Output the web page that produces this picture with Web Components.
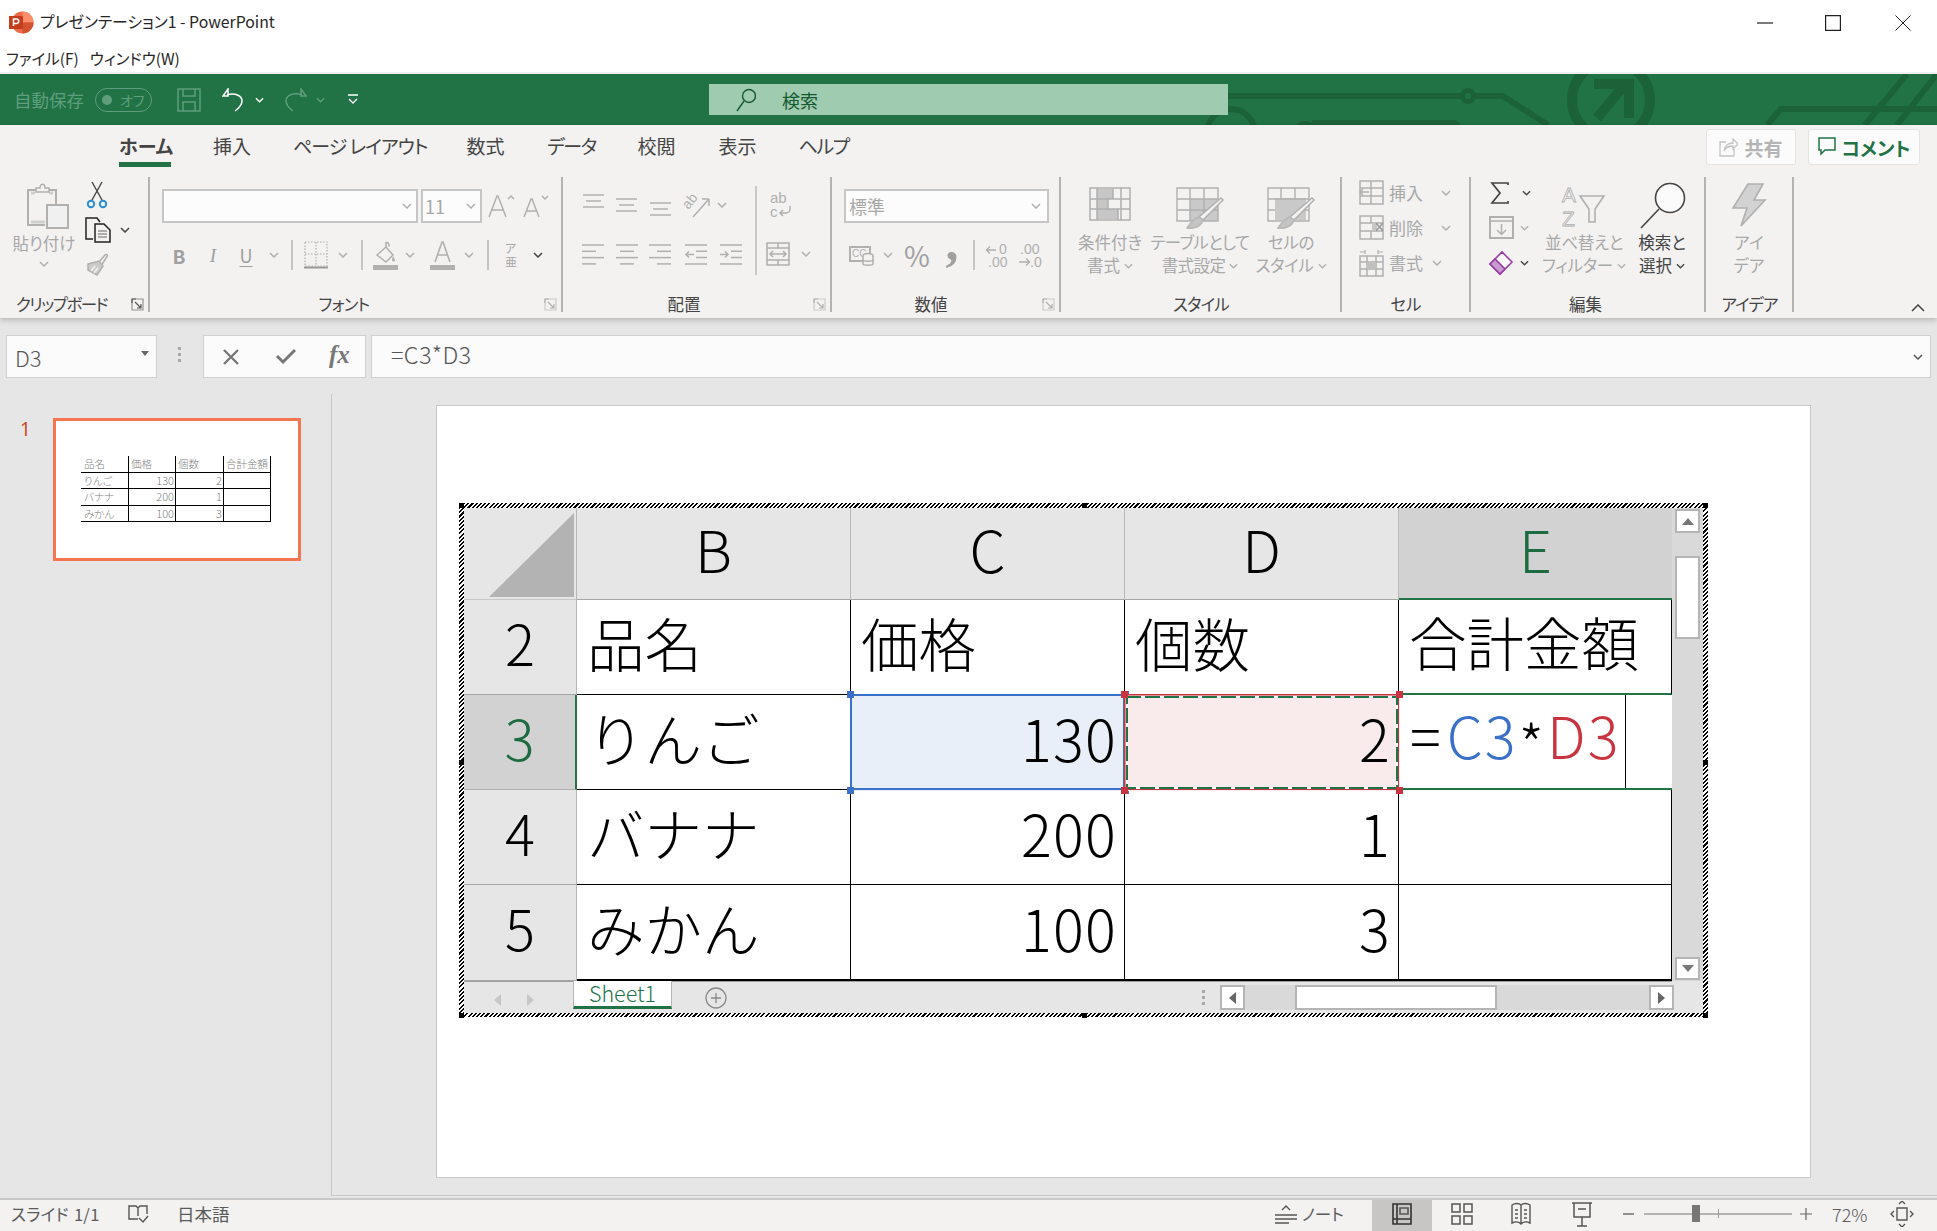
<!DOCTYPE html>
<html lang="ja">
<head>
<meta charset="utf-8">
<title>プレゼンテーション1 - PowerPoint</title>
<style>
  html, body { margin:0; padding:0; background:#e6e6e6; }
  body { width:1937px; height:1231px; overflow:hidden; font-family:"Noto Sans CJK JP","Noto Sans",sans-serif; display:flex; flex-direction:column; }
</style>
</head>
<body>
<x-titlebar>プレゼンテーション1 - PowerPoint</x-titlebar>
<x-menubar></x-menubar>
<x-qat></x-qat>
<x-ribbon></x-ribbon>
<x-formula name="D3" value="=C3*D3"></x-formula>
<x-main>
  <x-thumb slot="pane"></x-thumb>
  <x-sheet>
    <x-cell kind="corner"></x-cell>
    <x-cell kind="col">B</x-cell><x-cell kind="col">C</x-cell><x-cell kind="col">D</x-cell><x-cell kind="col" active>E</x-cell>

    <x-cell kind="row">2</x-cell>
    <x-cell>品名</x-cell><x-cell>価格</x-cell><x-cell>個数</x-cell><x-cell top>合計金額</x-cell>

    <x-cell kind="row" active>3</x-cell>
    <x-cell lead>りんご</x-cell><x-cell num sel="blue">130</x-cell><x-cell num sel="red">2</x-cell>
    <x-cell edit><span style="color:#000;margin:0 6px 0 4px">=</span><span style="color:#3a70c8;letter-spacing:2px">C3</span><span style="color:#000;position:relative;top:9px;margin:0 3px 0 1px">*</span><span style="color:#c8343f;letter-spacing:2px">D3</span></x-cell>

    <x-cell kind="row">4</x-cell>
    <x-cell>バナナ</x-cell><x-cell num>200</x-cell><x-cell num>1</x-cell><x-cell></x-cell>

    <x-cell kind="row">5</x-cell>
    <x-cell last>みかん</x-cell><x-cell num last>100</x-cell><x-cell num last>3</x-cell><x-cell last></x-cell>
  </x-sheet>
</x-main>
<x-status></x-status>

<script>
const FONT = '"Noto Sans CJK JP","Noto Sans",sans-serif';
const LAT = `'Liberation Sans',sans-serif`;
const G = '#b0b0b0', D = '#444444', GREEN = '#217346';

// small helpers for the ribbon markup
const ch = (color = G, w = 10) => `<svg width="${w}" height="6" viewBox="0 0 10 6" style="display:block"><path d="M1 1l4 4 4-4" fill="none" stroke="${color}" stroke-width="1.5"/></svg>`;
const svg = (w, h, inner, extra = '') => `<svg width="${w}" height="${h}" viewBox="0 0 ${w} ${h}" fill="none" stroke="${G}" stroke-width="1.5" style="display:block;overflow:visible;${extra}">${inner}</svg>`;
const c = (w, html, style = '') => `<span class="c" style="width:${w}px;${style}">${html}</span>`;
const launcher = (color = G) => `<svg class="launch" width="13" height="13" viewBox="0 0 13 13" fill="none" stroke="${color}" stroke-width="1.2"><path d="M1 1h11v11H1z" stroke-opacity=".6"/><path d="M1 1h4M1 1v4M4 4l6 6M6 10h4V6"/></svg>`;
const lines = (widths, gap = 6) => widths.map((wd, i) => `<path d="M${wd[0]} ${i * gap + 1}h${wd[1]}"/>`).join('');
const label = (x, y, size, t, extra = '') => `<text x="${x}" y="${y}" font-family="${LAT}" font-size="${size}" fill="${G}" stroke="none" ${extra}>${t}</text>`;

const ICONS = {
  paste: svg(42, 46, `<path d="M21 7h8v15M18 42H1V7h8" stroke-width="2"/><path d="M4 10h4M22 10h4M4 39h14" stroke="#cfcfcf" stroke-width="3"/><path d="M9 9V5h4c0-5 5-5 5 0h4v4z" fill="#f3f2f1"/><path d="M20 22h21v23H20z" fill="#f0f0f0" stroke-width="2"/>`),
  cut: svg(24, 28, `<path d="M7 1l10 18M17 1L7 19" stroke="${D}" stroke-width="1.4"/><circle cx="6" cy="23" r="3.2" stroke="#2b8fd1" stroke-width="2"/><circle cx="18" cy="23" r="3.2" stroke="#2b8fd1" stroke-width="2"/>`),
  copy: svg(26, 26, `<path d="M8 22H1V1h11l3 4" stroke="#222"/><path d="M10 7h9l6 6v12H10z" stroke="#222"/><path d="M13 14h9M13 17h9M13 20h9" stroke="#666" stroke-width="1.2"/>`),
  brush: svg(26, 24, `<path d="M14 10l6-7c1-1.500 3 0 2 1.500l-5 8" fill="none"/><path d="M3 12l11-3 4 5-6 9-9-5z" fill="#cbcbcb"/><path d="M6 19l4-5M9 21l4-5" stroke="#f3f2f1"/>`),
  borders: svg(24, 28, `<path d="M1 1h22v24H1z" stroke-dasharray="1.500 1.500" stroke-width="1.2"/><path d="M12 1v24M1 13h22" stroke-dasharray="1.500 1.500" stroke-width="1.2"/><path d="M0 26.500h24" stroke-width="2" stroke="#999"/>`),
  fill: svg(25, 29, `<path d="M4 14L13 6l7 8-7 7z"/><path d="M13 6V1.500c2-.5 3 .5 3 4" /><path d="M20 15c1 2 2 3 2 4a1.500 1.500 0 01-3 0c0-1 .5-2 1-4z" fill="${G}" stroke="none"/><path d="M0 24h25v5H0z" fill="${G}" stroke="none"/>`),
  fontA: svg(25, 29, `<path d="M5 21L12 1h1l7 20M7.500 14h10" stroke-width="1.6"/><path d="M0 24h25v5H0z" fill="${G}" stroke="none"/>`),
  alignTop: svg(21, 14, lines([[0,21],[3,15],[0,21]])),
  alignMid: svg(21, 14, lines([[0,21],[3,15],[0,21]])),
  alignLeft: svg(22, 21, lines([[0,22],[0,14],[0,22],[0,14]],6.3)),
  alignCen: svg(22, 21, lines([[0,22],[4,14],[0,22],[4,14]],6.3)),
  alignRight: svg(22, 21, lines([[0,22],[8,14],[0,22],[8,14]],6.3)),
  indDec: svg(22, 21, `<path d="M0 1h22M11 7.300h11M11 13.600h11M0 20h22"/><path d="M9 10.500H1M4 7.500l-3 3 3 3"/>`),
  indInc: svg(22, 21, `<path d="M0 1h22M11 7.300h11M11 13.600h11M0 20h22"/><path d="M0 10.500h8M5 7.500l3 3-3 3"/>`),
  orient: svg(25, 26, `<path d="M8 25L24 7M24 7h-7M24 7v7"/>${label(-2, 13, 14, 'ab', 'transform="rotate(-50 6 10)"')}`),
  wrap: svg(22, 26, `${label(0, 11, 15, 'ab')}${label(0, 25, 15, 'c')}<path d="M20 14v3a4 4 0 01-4 4h-6M13 18l-3 3 3 3"/>`),
  merge: svg(24, 24, `<path d="M1 1h22v22H1zM1 6h22M1 18h22M12 1v5M12 18v5" stroke-width="1.6"/><path d="M4 12h16M7 9l-3 3 3 3M17 9l3 3-3 3"/>`),
  currency: svg(25, 21, `<path d="M1 2h20v14H1z" stroke-width="2"/>${label(3, 12, 10, 'CC')}<ellipse cx="19" cy="11" rx="5" ry="2.500" fill="#f3f2f1"/><path d="M14 11v8c0 1.500 10 1.500 10 0v-8" fill="#f3f2f1"/><path d="M14 15c0 1.500 10 1.500 10 0"/>`),
  incDec: svg(25, 24, `<path d="M11 7H2M5 3.500L1.500 7 5 10.500" stroke-width="1.4"/>${label(14, 11, 14, '0')}${label(3, 24, 14, '.00')}`),
  decDec: svg(25, 24, `${label(2, 11, 14, '.00')}<path d="M1 19h10M8 15.500l3.500 3.500-3.500 3.500" stroke-width="1.4"/>${label(12, 24, 14, '.0')}`),
  cond: svg(42, 34, `<path d="M8 2h16v10H8zM8 12h11v10H8zM8 22h21v10H8z" fill="#c6c6c6" stroke="none"/><path d="M1 1h40v32H1zM1 12h40M1 22h40M8 1v32M24 1v11M32 1v32M19 12v10M29 22v11" stroke-width="1.5"/>`),
  tbl: svg(48, 50, `<path d="M14 12h28v22H14z" fill="#c9c9c9" stroke="none"/><path d="M1 1h41v33H1zM1 12h41M1 23h41M14 1v33M28 1v33" stroke-width="1.4"/><path d="M45 11l2 2-20 20-4-3z" fill="#f3f2f1"/><path d="M23 30c-4 1-8 5-12 11 6 1 14-1 16-8z" fill="#c4c4c4" stroke="#b8b8b8"/>`),
  cellSt: svg(48, 50, `<path d="M8 11h31v22H8z" fill="#c9c9c9" stroke="none"/><path d="M1 1h41v33H1zM1 12h41M1 23h7M35 23h7M14 1v11M28 1v11" stroke-width="1.4"/><path d="M45 11l2 2-20 20-4-3z" fill="#f3f2f1"/><path d="M23 30c-4 1-8 5-12 11 6 1 14-1 16-8z" fill="#c4c4c4" stroke="#b8b8b8"/>`),
  insert: svg(25, 25, `<path d="M1 1h23v23H1zM1 8h23M1 16h23M12 1v23" stroke-width="1.5"/><path d="M10 12H1M4 9l-3 3 3 3" fill="#f3f2f1"/>`),
  del: svg(25, 25, `<path d="M1 1h23v23H1zM1 8h23M1 16h23M12 1v7M12 16v8" stroke-width="1.5"/><path d="M13 8h5v8h-5z" fill="#c6c6c6" stroke="none"/><path d="M17 8l7 8M24 8l-7 8" stroke="#999"/>`),
  format: svg(25, 29, `<path d="M1 8h23v20H1zM1 14h23M1 21h23M8 8v20M17 8v20" stroke-width="1.5"/><path d="M8 14h9v7H8z" fill="#c0c0c0" stroke="none"/><path d="M1 4h5M19 4h5M6 2v4M19 2v4" stroke-width="1.2"/>`),
  sum: svg(20, 22, `<path d="M18 3V1H2l8 10-8 10h16v-2" stroke="${D}" stroke-width="1.7"/>`),
  fillDown: svg(25, 23, `<path d="M1 1h23v21H1z" stroke-width="2"/><path d="M1 5h23"/><path d="M12.500 8v10M8 14l4.500 4.500L17 14" />`),
  eraser: svg(24, 24, `<path d="M1 13L13 1l10 10-12 12z" fill="#fff" stroke="#9a3ca8" stroke-width="1.6"/><path d="M1 13l5-5 10 10-5 5z" fill="#c79bd0" stroke="#9a3ca8" stroke-width="1.6"/>`),
  sort: svg(44, 44, `${label(0, 19, 21, 'A').replace(`fill="${G}" stroke="none"`, `fill="none" stroke="${G}" stroke-width=".8"`)}${label(0, 43, 21, 'Z').replace(`fill="${G}" stroke="none"`, `fill="none" stroke="${G}" stroke-width=".8"`)}<path d="M18 13h24L33 26v13h-6V26z" stroke-width="1.6"/>`),
  find: svg(46, 46, `<circle cx="31" cy="15" r="14.500" fill="#fbfbfb" stroke="${D}" stroke-width="1.6"/><path d="M20 26L2 45" stroke="${D}" stroke-width="1.6"/>`),
  bolt: svg(34, 44, `<path d="M16 1h15l-9 16h11L9 43l6-18H1z" fill="#d2d2d2" stroke-width="1.6"/>`)
};

class XTitlebar extends HTMLElement {
  connectedCallback() {
    this.attachShadow({ mode: 'open' }).innerHTML = `
      <style>
        :host { display:flex; align-items:center; height:45px; background:#fff; color:#262626; font:15.800px/22px ${FONT}; font-feature-settings:"palt"; }
        .logo { margin:-1px 6px 0 9px; display:block; }
        .t { margin-top:-2px; }
        .win { margin-left:auto; display:flex; align-items:center; }
        .win span { width:71px; height:16px; display:flex; justify-content:center; align-items:center; }
      </style>
      <svg class="logo" width="25" height="23" viewBox="0 0 25 23">
        <circle cx="13.500" cy="11.500" r="11" fill="#ed6c47"/>
        <path d="M13.500.5a11 11 0 0111 11h-11z" fill="#ff8f6b"/>
        <path d="M13.500 11.500h11a11 11 0 01-11 11z" fill="#d35230"/>
        <path d="M0 5h13a1 1 0 011 1v11a1 1 0 01-1 1H0z" fill="#c43e1c"/>
        <path d="M4.500 15V8h3a2.200 2.200 0 010 4.500h-3" fill="none" stroke="#fff" stroke-width="1.500"/>
      </svg>
      <span class="t"><slot></slot></span>
      <div class="win">
        <span style="margin-right:-3px"><svg width="16" height="2" style="display:block"><path d="M0 1h16" stroke="#222" stroke-width="1.200"/></svg></span>
        <span><svg width="16" height="16" style="display:block"><path d="M.6.6h14.800v14.800H.6z" fill="none" stroke="#222" stroke-width="1.200"/></svg></span>
        <span style="margin-left:0;width:69px"><svg width="16" height="16" style="display:block"><path d="M.5.5l15 15M15.500.5l-15 15" fill="none" stroke="#222" stroke-width="1"/></svg></span>
      </div>`;
  }
}

class XMenubar extends HTMLElement {
  connectedCallback() {
    this.attachShadow({ mode: 'open' }).innerHTML = `
      <style>
        :host { display:flex; gap:11px; height:27px; padding-left:6px; align-items:flex-start; background:#fff; color:#262626; border-bottom:2px solid #f0f0f0; font:15.500px/26px ${FONT}; font-feature-settings:"palt"; }
      </style>
      <span>ファイル(F)</span><span>ウィンドウ(W)</span>`;
  }
}

class XQat extends HTMLElement {
  connectedCallback() {
    const dim = '#5f9e7c';
    this.attachShadow({ mode: 'open' }).innerHTML = `
      <style>
        :host { display:flex; align-items:center; height:51px; background:${GREEN}; position:relative; overflow:hidden; font:16px/20px ${FONT}; color:${dim}; font-feature-settings:"palt"; }
        .art { position:absolute; left:0; top:0; }
        .auto { margin-left:14px; width:71px; font-size:17.500px; white-space:nowrap; }
        .pill { margin-left:10px; width:57px; height:24px; box-sizing:border-box; border:1.500px solid ${dim}; border-radius:12px; display:flex; align-items:center; font-size:14px; gap:8px; padding-left:6px; }
        .pill i { width:10px; height:10px; border-radius:50%; background:${dim}; }
        .q { display:flex; align-items:center; position:relative; }
        .search { position:absolute; left:709px; top:10px; width:519px; height:31px; background:#9fcbb1; display:flex; align-items:center; color:#14592f; font-size:18px; }
        .search svg { margin-left:27px; }
        .search span { margin-left:26px; }
      </style>
      <svg class="art" width="1937" height="51" viewBox="0 74 1937 51" fill="none" stroke="#1c6238">
        <path d="M1228 96H1503L1548 125" stroke-width="6"/>
        <circle cx="1468" cy="96" r="5.500" stroke-width="5" fill="${GREEN}"/>
        <circle cx="1231" cy="133" r="24" stroke-width="6"/>
        <path d="M1298 130c0-8 14-8 14 0M1312 123H1454l5 3" stroke-width="6"/>
        <circle cx="1611" cy="100" r="39" stroke-width="10"/>
        <path d="M1597 118L1627 82" stroke-width="10"/>
        <path d="M1594 84H1629V118" stroke-width="10"/>
        <path d="M1767 125L1781 109H1937M1865 125L1907 74M1897 125L1937 74" stroke-width="6"/>
      </svg>
      <span class="auto q">自動保存</span>
      <span class="pill"><i></i><span>オフ</span></span>
      <span class="q" style="margin-left:25px"><svg width="24" height="24" fill="none" stroke="${dim}" stroke-width="1.500"><path d="M1 1h22v22H1zM6 1v7h12V1M6 23v-9h12v9"/></svg></span>
      <span class="q" style="margin-left:21px"><svg width="23" height="24" fill="none" stroke="#fff" stroke-width="1.500"><path d="M1 8l5-7v7zM5 7c8-3 15 1 15 6 0 3-3 7-7 10"/></svg></span>
      <span class="q" style="margin-left:10px">${ch('#fff', 9)}</span>
      <span class="q" style="margin-left:20px"><svg width="23" height="24" fill="none" stroke="${dim}" stroke-width="1.500"><path d="M22 8l-5-7v7zM18 7C10 4 2 7 2 13c0 3 3 7 7 10"/></svg></span>
      <span class="q" style="margin-left:9px">${ch(dim, 9)}</span>
      <span class="q" style="margin-left:22px"><svg width="12" height="11" fill="none" stroke="#fff" stroke-width="1.400"><path d="M1 1h10M2 5l4 4 4-4"/></svg></span>
      <div class="search">
        <svg width="20" height="24" fill="none" stroke="#14592f" stroke-width="1.400"><circle cx="13" cy="8" r="6.500"/><path d="M8 13l-7 10"/></svg>
        <span>検索</span>
      </div>`;
  }
}

class XGroup extends HTMLElement {
  connectedCallback() {
    const w = this.getAttribute('w');
    const launch = this.hasAttribute('launch');
    const color = this.getAttribute('launch') || G;
    this.attachShadow({ mode: 'open' }).innerHTML = `
      <style>
        :host { display:flex; flex-direction:column; flex:none; width:${w}px; height:141px; box-sizing:border-box;
                background:linear-gradient(#b3b3b3,#b3b3b3) right top / 2px 135px no-repeat; }
        .body { height:114px; display:flex; }
        .foot { height:26px; display:flex; align-items:center; padding-right:4px; font:16.500px/26px ${FONT}; color:${D}; font-feature-settings:"palt"; }
        .foot .t { flex:1; text-align:center; white-space:nowrap; }
        .launch { margin-right:2px; margin-top:0; flex:none; }
      </style>
      <div class="body"><slot></slot></div>
      <div class="foot"><span class="t" style="${this.getAttribute('lstyle') || ''}">${this.getAttribute('label')}</span>${launch ? launcher(color) : ''}</div>`;
  }
}
customElements.define('x-group', XGroup);

class XRibbon extends HTMLElement {
  connectedCallback() {
    const tabs = [['ホーム', 52, 0], ['挿入', 39, 0], ['ページ レイアウト', 131, -1], ['数式', 40, 0], ['データ', 48, -1.4], ['校閲', 40, 0], ['表示', 39, 0], ['ヘルプ', 48, -1.4]];
    const bigBtn = (w, icon, l1, l2, col = '#a8a8a8', chev = G, top = 10, ls = 0) => `
      <div class="big" style="width:${w}px;color:${col};letter-spacing:${ls}px">
        <div class="bi" style="height:${54 - top}px;padding-top:${top}px">${icon}</div>
        <div>${l1}</div>
        <div class="l2"><span>${l2}</span>${chev ? ch(chev, 9) : ''}</div>
      </div>`;
    this.attachShadow({ mode: 'open' }).innerHTML = `
      <style>
        :host { display:block; background:#f3f2f1; height:193px; box-shadow:0 2px 6px rgba(0,0,0,.22); position:relative; z-index:2; color:${D}; font:16.500px/23px ${FONT}; font-feature-settings:"palt"; }
        .tabs { display:flex; gap:41.500px; padding:4px 17px 0 119px; height:48px; font-size:19px; }
        .tab { height:33px; line-height:34px; border-bottom:5px solid transparent; box-sizing:content-box; text-align:center; white-space:nowrap; }
        .tab.on { font-weight:700; border-bottom-color:${GREEN}; }
        .tools { margin-left:auto; display:flex; gap:12px; margin-right:0; margin-top:0; }
        .tool { height:36px; box-sizing:border-box; background:#fbfbfb; border:1.500px solid #e4e3e1; border-radius:3px; display:flex; align-items:center; justify-content:center; gap:6px; font-weight:700; font-size:19px; }
        .row-gr { display:flex; height:141px; }
        .c { display:flex; justify-content:center; align-items:center; flex:none; height:100%; }
        .r { display:flex; align-items:center; height:34px; }
        .sep { width:1.500px; height:30px; background:#c4c4c4; }
        .box { box-sizing:border-box; height:34px; border:2px solid #c6c6c6; background:#fcfcfc; display:flex; align-items:center; justify-content:flex-end; padding-right:4px; color:#a8a8a8; }
        .col { display:flex; flex-direction:column; }
        .big { display:flex; flex-direction:column; align-items:center; flex:none; line-height:23px; text-align:center; white-space:nowrap; }
        .bi { box-sizing:content-box; }
        .l2 { display:flex; align-items:center; gap:4px; height:23px; }
        .txt { color:#a8a8a8; }
        .collapse { margin-left:auto; align-self:flex-end; margin:0 12px 6px auto; }
      </style>
      <div class="tabs">
        ${tabs.map((t, i) => `<span class="tab${i === 0 ? ' on' : ''}" style="width:${t[1]}px;letter-spacing:${t[2]}px">${t[0]}</span>`).join('')}
        <div class="tools">
          <div class="tool" style="width:90px;color:#b5b5b5"><svg width="19" height="20" fill="none" stroke="#c4c4c4" stroke-width="1.300"><path d="M7 5H1v14h14v-7M5 14c1-6 5-8 9-8V2l5 5-5 5V9c-4 0-7 1-9 5z"/></svg>共有</div>
          <div class="tool" style="width:112px;color:${GREEN}"><svg width="18" height="20" fill="none" stroke="${GREEN}" stroke-width="1.500"><path d="M1 1h16v12H7l-4 4v-4H1z"/></svg>コメント</div>
        </div>
      </div>
      <div class="row-gr">
        <x-group w="150" label="クリップボード" launch="#555" lstyle="padding-right:8px;letter-spacing:-1.500px;">
          <div class="big" style="width:64px;margin-left:12px;color:#a8a8a8">
            <div style="height:50px;padding-top:6px;margin-left:8px">${ICONS.paste}</div>
            <div style="margin-top:-1px">貼り付け</div>
            <div style="height:12px;padding-top:6px">${ch()}</div>
          </div>
          <div class="col" style="margin-left:9px">
            <div class="r" style="height:30px;margin-top:3px">${ICONS.cut}</div>
            <div class="r" style="height:36px;gap:9px;margin-top:2px">${ICONS.copy}${ch(D)}</div>
            <div class="r" style="height:30px;margin-top:1px">${ICONS.brush}</div>
          </div>
        </x-group>

        <x-group w="413" label="フォント" launch lstyle="padding-right:6px;letter-spacing:-.8px;">
          <div class="col" style="padding:12px 0 0 12px">
            <div class="r">
              <div class="box" style="width:256px">${ch()}</div>
              <div class="box" style="width:61px;margin-left:3px;justify-content:space-between;padding-left:2px"><span style="font-size:18px">11</span>${ch()}</div>
              <span style="margin-left:6px;display:flex;align-items:flex-start">
                <svg width="28" height="26" fill="none" stroke="${G}" stroke-width="1.500"><path d="M1 24L9 3h1l8 21M4 17h11M20 6l3-3 3 3"/></svg>
              </span>
              <span style="margin-left:7px;display:flex">
                <svg width="28" height="26" fill="none" stroke="${G}" stroke-width="1.500"><path d="M1 24L8 6h1l7 18M4 18h10M19 3l3 3 3-3"/></svg>
              </span>
            </div>
            <div class="r" style="margin-top:15px">
              ${c(34, `<span style="font-weight:700;font-size:19px;color:#a0a0a0">B</span>`)}
              ${c(34, `<span style="font-style:italic;font-size:19px;color:#a0a0a0;font-family:'Liberation Serif',serif">I</span>`)}
              ${c(32, `<span style="font-size:18px;color:#a0a0a0;text-decoration:underline;text-underline-offset:3px">U</span>`)}
              ${c(24, ch())}
              ${c(12, '<i class="sep"></i>')}
              ${c(36, ICONS.borders)}
              ${c(18, ch())}
              ${c(20, '<i class="sep"></i>')}
              ${c(26, ICONS.fill)}
              ${c(23, ch())}
              ${c(42, ICONS.fontA)}
              ${c(12, ch())}
              ${c(26, '<i class="sep"></i>')}
              ${c(20, `<span style="display:flex;flex-direction:column;font-size:12px;line-height:14px;color:#a8a8a8"><span style="height:14px;overflow:visible">ア</span><span style="height:14px">亜</span></span>`)}
              ${c(34, ch(D))}
            </div>
          </div>
        </x-group>

        <x-group w="269" label="配置" launch lstyle="padding-right:8px;">
          <div class="col" style="padding-top:11px;margin-left:13px;width:172px">
            <div class="r">
              ${c(34, `<span style="margin-top:-8px">${ICONS.alignTop}</span>`)}
              ${c(33, `<span style="margin-top:-1px">${ICONS.alignMid}</span>`)}
              ${c(34, `<span style="margin-top:7px">${ICONS.alignMid}</span>`)}
              ${c(40, ICONS.orient)}
              ${c(10, ch())}
            </div>
            <div class="r" style="margin-top:15px">
              ${c(34, ICONS.alignLeft)}${c(33, ICONS.alignCen)}${c(34, ICONS.alignRight)}${c(37, ICONS.indDec)}${c(34, ICONS.indInc)}
            </div>
          </div>
          <i style="width:2px;height:89px;background:#c8c8c8;margin:9px 0 0 7px"></i>
          <div class="col" style="padding-top:11px;width:60px">
            <div class="r">${c(48, ICONS.wrap)}</div>
            <div class="r" style="margin-top:15px">${c(42, ICONS.merge)}${c(14, ch())}</div>
          </div>
        </x-group>

        <x-group w="229" label="数値" launch lstyle="padding-right:12px;">
          <div class="col" style="padding:12px 0 0 12px">
            <div class="box" style="width:205px;justify-content:space-between;padding-left:3px;padding-right:6px;font-size:18px"><span>標準</span>${ch()}</div>
            <div class="r" style="margin-top:15px">
              ${c(34, ICONS.currency)}${c(20, ch())}
              ${c(38, `<span style="font-size:28px;color:#a0a0a0">%</span>`)}
              ${c(32, `<span style="font:700 52px/20px 'Liberation Serif',serif;color:#a0a0a0;margin-top:-24px">,</span>`)}
              ${c(12, '<i class="sep"></i>')}
              ${c(34, ICONS.incDec)}${c(32, ICONS.decDec)}
            </div>
          </div>
        </x-group>

        <x-group w="281" label="スタイル" lstyle="padding-left:3px;letter-spacing:-.8px;">
          <div style="width:9px"></div>
          ${bigBtn(80, ICONS.cond, '条件付き', '書式')}
          ${bigBtn(100, ICONS.tbl, 'テーブルとして', '書式設定', '#a8a8a8', G, 10, -.6)}
          ${bigBtn(82, ICONS.cellSt, 'セルの', 'スタイル', '#a8a8a8', G, 10, -.3)}
        </x-group>

        <x-group w="129" label="セル" lstyle="padding-left:3px;">
          <div class="col txt" style="padding:0 0 0 17px;margin-top:-2px;font-size:17px">
            <div class="r" style="height:35px;gap:5px">${ICONS.insert}<span style="width:35px">挿入</span><span style="margin-left:12px">${ch()}</span></div>
            <div class="r" style="height:35px;gap:5px">${ICONS.del}<span style="width:35px">削除</span><span style="margin-left:12px">${ch()}</span></div>
            <div class="r" style="height:35px;gap:5px">${ICONS.format}<span style="width:35px">書式</span><span style="margin-left:3px">${ch()}</span></div>
          </div>
        </x-group>

        <x-group w="235" label="編集" lstyle="padding-right:2px;">
          <div class="col" style="width:69px;padding-left:17px;box-sizing:border-box;margin-top:-2px">
            <div class="r" style="height:35px">${c(24, ICONS.sum)}<span style="margin-left:10px">${ch(D, 9)}</span></div>
            <div class="r" style="height:35px">${c(26, ICONS.fillDown)}<span style="margin-left:6px">${ch(G, 9)}</span></div>
            <div class="r" style="height:35px">${c(26, ICONS.eraser)}<span style="margin-left:6px">${ch(D, 9)}</span></div>
          </div>
          ${bigBtn(88, ICONS.sort, '並べ替えと', 'フィルター', '#a8a8a8', G, 6, -.3)}
          ${bigBtn(68, ICONS.find, '検索と', '選択', D, D, 6)}
        </x-group>

        <x-group w="88" label="アイデア" lstyle="padding-left:3px;letter-spacing:-1px;">
          ${bigBtn(86, ICONS.bolt, 'アイ', 'デア', '#a8a8a8', '', 6)}
        </x-group>

        <svg class="collapse" width="14" height="8" fill="none" stroke="${D}" stroke-width="1.500"><path d="M1 7l6-6 6 6"/></svg>
      </div>`;
  }
}

class XFormula extends HTMLElement {
  connectedCallback() {
    this.attachShadow({ mode: 'open' }).innerHTML = `
      <style>
        :host { display:flex; height:76px; box-sizing:border-box; padding:17px 6px 0 6px; background:#e6e6e6; color:#555; font:300 22px/42px ${FONT}; }
        .b { box-sizing:border-box; height:43px; background:#fbfbfb; border:1px solid #cfcfcf; display:flex; align-items:center; }
        .name { width:151px; padding:0 8px; justify-content:space-between; }
        .name span { margin-top:0; }
        .name i { width:0; height:0; border:4px solid transparent; border-top:5px solid #666; border-bottom:0; margin-right:-1px; margin-top:-6px; }
        .dots { width:46px; display:flex; justify-content:center; padding-top:12px; height:18px; }
        .dots svg { display:block; }
        .fx { width:163px; padding:0 0 0 18px; }
        .val { flex:1; margin-left:5px; padding:0 7px 0 19px; justify-content:space-between; margin-right:0; }
        .val span { margin-top:-6px; font-size:23.500px; letter-spacing:.3px; }
      </style>
      <div class="b name"><span>${this.getAttribute('name')}</span><i></i></div>
      <div class="dots"><svg width="4" height="16" fill="#a8a8a8"><rect width="3" height="3"/><rect y="6" width="3" height="3"/><rect y="12" width="3" height="3"/></svg></div>
      <div class="b fx">
        <svg width="18" height="18" fill="none" stroke="#777" stroke-width="2.400"><path d="M2 2l14 14M16 2L2 16"/></svg>
        <svg width="20" height="17" style="margin:0 0 0 36px" fill="none" stroke="#777" stroke-width="3"><path d="M1 8l6 6L19 2"/></svg>
        <span style="font:italic 700 25px 'Liberation Serif',serif;color:#777;margin:-3px 0 0 33px">fx</span>
      </div>
      <div class="b val"><span>${this.getAttribute('value')}</span>${ch('#555', 10)}</div>`;
  }
}

class XThumb extends HTMLElement {
  connectedCallback() {
    const rows = [['品名', '価格', '個数', '合計金額'], ['りんご', '130', '2', ''], ['バナナ', '200', '1', ''], ['みかん', '100', '3', '']];
    this.attachShadow({ mode: 'open' }).innerHTML = `
      <style>
        :host { display:flex; box-sizing:border-box; width:332px; padding:24px 0 0 20px; border-right:1px solid #c8c8c8; align-items:flex-start; }
        .n { width:33px; color:#d24726; font:400 19px/24px "Noto Sans",sans-serif; margin-top:-1px; }
        .s { width:248px; height:143px; box-sizing:border-box; border:3px solid #f4754f; background:#fff; padding:35px 0 0 25px; }
        .g { display:grid; grid-template-columns:48px 47px 48px 47px; grid-auto-rows:16.500px; width:190px; }
        .g span { font-size:10.500px; line-height:15px; color:#808080; font-weight:300; box-sizing:border-box; border-right:1.500px solid #000; border-bottom:1.500px solid #000; padding:0 1px 0 3px; white-space:nowrap; font-feature-settings:"palt"; overflow:hidden; }
        .g span.h { padding-left:2px; }
        .g span.h:first-child { padding-left:3px; }
        .g span.nm { text-align:right; padding:0 1px 0 0; font-size:11px; }
        .g span:nth-child(4n+1) { border-right-width:1px; }
      </style>
      <div class="n">1</div>
      <div class="s"><div class="g">${rows.map((r, ri) => r.map((t, ci) => `<span class="${ri === 0 ? 'h' : ''}${ri && ci ? ' nm' : ''}">${t}</span>`).join('')).join('')}</div></div>`;
  }
}

class XMain extends HTMLElement {
  connectedCallback() {
    this.attachShadow({ mode: 'open' }).innerHTML = `
      <style>
        :host { display:flex; height:804px; background:#e6e6e6; box-sizing:border-box; padding-bottom:2px; }
        ::slotted([slot=pane]) { height:802px; }
        .ed { flex:1; padding:11px 0 0 104px; border-bottom:1px solid #c8c8c8; box-sizing:border-box; }
        .slide { width:1375px; height:773px; box-sizing:border-box; background:#fff; border:1px solid #c8c8c8; padding:97px 0 0 22px; }
      </style>
      <slot name="pane"></slot>
      <div class="ed"><div class="slide"><slot></slot></div></div>`;
  }
}

class XSheet extends HTMLElement {
  connectedCallback() {
    const hatch = 'repeating-linear-gradient(-45deg,#000 0 1.500px,#fff 1.500px 3px)';
    const sq = (l, t) => `<i class="h" style="left:${l};top:${t}"></i>`;
    const r = 'calc(100% - 5px)', b = 'calc(100% - 4px)', ml = 'calc(50% - 2px)';
    this.attachShadow({ mode: 'open' }).innerHTML = `
      <style>
        :host { display:block; position:relative; width:1249px; height:514px; box-sizing:border-box; padding:5px 5px 4px 5px; background:${hatch}; }
        .h { position:absolute; width:5px; height:5px; background:#000; z-index:3; }
        .inner { width:1239px; height:505px; background:#e6e6e6; display:grid; grid-template-columns:1208px 31px; grid-template-rows:473px 32px; }
        .grid { display:grid; grid-template-columns:113px 274px 274px 274px 273px; grid-template-rows:92px 95px 95px 95px 96px; background:#fff; }
        .v { background:#d9d9d9; display:flex; flex-direction:column; align-items:center; padding-top:1px; position:relative; }
        .sb { box-sizing:border-box; background:#fff; border:2px solid #b5b5b5; display:flex; align-items:center; justify-content:center; flex:none; }
        .tabs { display:flex; align-items:flex-start; background:#e6e6e6; position:relative; border-top:1px solid #a0a0a0; font:20px/26px ${FONT}; color:${GREEN}; height:32px; box-sizing:border-box; }
        .nav { width:109px; display:flex; gap:26px; padding:12px 0 0 30px; box-sizing:border-box; }
        .tab { width:97px; background:#fff; border-left:1px solid #b5b5b5; border-right:1px solid #b5b5b5; border-bottom:3px solid ${GREEN}; text-align:center; box-sizing:content-box; height:25px; margin-top:-1px; line-height:23px; font-weight:300; font-size:21.500px; }
        .plus { margin:5px 0 0 33px; }
        .dots { margin:8px 0 0 0; position:absolute; left:738px; }
        .hs { position:absolute; left:756px; top:3px; width:454px; height:25px; display:flex; background:#d9d9d9; }
        .tail { background:#e6e6e6; height:32px; }
      </style>
      ${[['0', '0'], [ml, '0'], [r, '0'], ['0', '50%'], [r, '50%'], ['0', b], [ml, b], [r, b]].map(p => sq(p[0], p[1])).join('')}
      <div class="inner">
        <div class="grid"><slot></slot></div>
        <div class="v">
          <div class="sb" style="width:25px;height:24px"><svg width="12" height="7" fill="#777"><path d="M6 0l6 7H0z"/></svg></div>
          <div class="sb" style="width:25px;height:83px;margin-top:23px"></div>
          <div class="sb" style="width:25px;height:23px;margin-top:auto;margin-bottom:1px"><svg width="12" height="7" fill="#777"><path d="M6 7l6-7H0z"/></svg></div>
        </div>
        <div class="tabs">
          <div class="nav">
            <svg width="7" height="12" fill="#c6c6c6"><path d="M7 0v12L0 6z"/></svg>
            <svg width="7" height="12" fill="#c6c6c6"><path d="M0 0v12l7-6z"/></svg>
          </div>
          <div class="tab">Sheet1</div>
          <svg class="plus" width="22" height="22" fill="none" stroke="#888" stroke-width="1.300"><circle cx="11" cy="11" r="10"/><path d="M6 11h10M11 6v10"/></svg>
          <svg class="dots" width="4" height="16" fill="#a8a8a8"><rect width="3" height="3"/><rect y="6" width="3" height="3"/><rect y="12" width="3" height="3"/></svg>
          <div class="hs">
            <div class="sb" style="width:25px;height:25px"><svg width="7" height="12" fill="#666"><path d="M7 0v12L0 6z"/></svg></div>
            <div class="sb" style="width:202px;height:25px;margin-left:50px"></div>
            <div class="sb" style="width:25px;height:25px;margin-left:auto"><svg width="7" height="12" fill="#666"><path d="M0 0v12l7-6z"/></svg></div>
          </div>
        </div>
        <div class="tail"></div>
      </div>`;
  }
}

class XCell extends HTMLElement {
  connectedCallback() {
    const kind = this.getAttribute('kind') || '';
    const sel = this.getAttribute('sel');
    const hc = sel === 'blue' ? '#3a70c8' : '#c8343f';
    const hs = sel ? ['0;top:0', '100%;top:0', '0;top:100%', '100%;top:100%'].map(p => `<i class="hd" style="left:${p}"></i>`).join('') : '';
    const corner = kind === 'corner' ? `<svg width="112" height="91" style="display:block"><path d="M25 89h85V5z" fill="#b3b3b3"/></svg>` : '';
    const dash = sel === 'red' ? `<svg class="dash"><rect width="100%" height="100%" fill="none" stroke="#fff" stroke-width="4"/><rect width="100%" height="100%" fill="none" stroke="${GREEN}" stroke-width="4" stroke-dasharray="15 4"/></svg>` : '';
    this.attachShadow({ mode: 'open' }).innerHTML = `
      <style>
        :host { display:flex; align-items:center; box-sizing:border-box; position:relative; min-width:0; overflow:visible; white-space:nowrap; color:#000; font:300 57.500px/60px ${FONT}; background:#fff;
                padding:0 0 11px 10px; border-right:1px solid #000; border-bottom:1px solid #000; }
        :host([kind=corner]) { padding:0; background:#e6e6e6; border-right:1px solid #b8b8b8; border-bottom:1px solid #c8c8c8; }
        :host([kind=col]), :host([kind=row]) { justify-content:center; padding:0 0 11px 0; background:#e6e6e6; border-right:1px solid #b8b8b8; border-bottom:1.500px solid #a6a6a6; }
        :host([kind=row]) { font-size:56px; }
        :host([kind=col][active]), :host([kind=row][active]) { background:#d2d2d2; color:#1d6b40; border-bottom-color:#b0b0b0; }
        :host([kind=col][active]) { border-bottom:2px solid ${GREEN}; border-right:0; }
        :host([kind=row][active]) { border-right:2px solid ${GREEN}; }
        :host([num]) { justify-content:flex-end; padding:0 7px 11px 0; letter-spacing:1.200px; }
        :host([last]) { border-bottom:2px solid #000; }
        :host([top]) { border-bottom:2px solid ${GREEN}; }
        :host([sel=blue]) { background:#e8eff9; box-shadow:inset 0 0 0 2px #3a70c8; border-color:transparent; z-index:1; margin:-1px; padding-right:8px; }
        :host([sel=red]) { background:#f9ebeb; box-shadow:inset 0 0 0 1.500px #c8343f; border-color:transparent; z-index:1; margin:-1px; padding-right:8px; }
        .dash { position:absolute; left:1.500px; top:1.500px; width:calc(100% - 3px); height:calc(100% - 3px); }
        :host([edit]) { border-right:0; border-bottom:2px solid ${GREEN}; padding:0 0 0 7px; }
        :host([edit]) .ed { display:block; width:219px; border-right:1px solid #000; height:93px; line-height:78px; }
        .hd { position:absolute; width:7px; height:7px; margin:-3.500px 0 0 -3.500px; background:${hc}; z-index:2; }
      </style>
      ${corner}${dash}${hs}${this.hasAttribute('edit') ? '<span class="ed"><slot></slot></span>' : '<span style="position:relative"><slot></slot></span>'}`;
  }
}

class XStatus extends HTMLElement {
  connectedCallback() {
    this.attachShadow({ mode: 'open' }).innerHTML = `
      <style>
        :host { display:flex; align-items:center; height:33px; box-sizing:border-box; border-top:2px solid #c8c8c8; background:#f3f2f1; color:#5a5a5a; font:16.500px/28px ${FONT}; font-feature-settings:"palt"; position:relative; }
        .on { background:#c8c6c4; height:31px; width:60px; display:flex; align-items:center; justify-content:center; margin-left:28px; padding-bottom:3px; box-sizing:border-box; }
        .i { display:flex; align-items:center; flex:none; margin-bottom:3px; }
        .t { margin-bottom:3px; white-space:nowrap; flex:none; }
      </style>
      <span class="t" style="margin-left:11px;width:87px;word-spacing:1px;letter-spacing:.3px">スライド 1/1</span>
      <svg class="i" style="margin-left:30px" width="21" height="20" fill="none" stroke="#555" stroke-width="1.400"><path d="M10 15H1V2h7l2 2 2-2h7v8M10 4v8M11 14l4 4 5-6"/></svg>
      <span class="t" style="margin-left:28px;width:55px;font-size:17.500px">日本語</span>
      <span class="i" style="margin-left:1043px;gap:5px">
        <svg width="22" height="21" fill="none" stroke="#555" stroke-width="1.400"><path d="M7 6l4-4 4 4M0 11h22M0 15h22M0 19h14"/></svg>
        <span style="width:42px;white-space:nowrap">ノート</span>
      </span>
      <span class="on"><svg width="20" height="22" fill="none" stroke="#333" stroke-width="1.600"><path d="M1 1h18v20H1zM5 1v20M1 16h18"/><path d="M8 5h8v6H8z" stroke="#555"/></svg></span>
      <span class="i" style="margin-left:19px"><svg width="22" height="22" fill="none" stroke="#555" stroke-width="1.500"><path d="M1 1h8v8H1zM13 1h8v8h-8zM1 13h8v8H1zM13 13h8v8h-8z"/></svg></span>
      <span class="i" style="margin-left:38px"><svg width="20" height="24" fill="none" stroke="#555" stroke-width="1.400"><path d="M1 3c3-2 7-2 9 0 2-2 6-2 9 0v18c-3-1.500-7-1.500-9 1-2-2.500-6-2.500-9-1zM10 3v19M4 8h3M4 12h3M4 16h3M13 8h3M13 12h3M13 16h3"/></svg></span>
      <span class="i" style="margin-left:41px"><svg width="20" height="25" fill="none" stroke="#555" stroke-width="1.500"><path d="M0 1h20M2 1v14h16V1M10 15v9M5 24h10M6 7h8"/></svg></span>
      <span class="i" style="margin-left:31px"><svg width="11" height="2"><path d="M0 1h11" stroke="#666" stroke-width="1.400"/></svg></span>
      <span class="i" style="margin-left:10px;width:148px;height:2px;background:#b3b3b3;position:relative">
        <i style="position:absolute;left:48px;top:-8px;width:8px;height:17px;background:#777"></i>
        <i style="position:absolute;left:74px;top:-4px;width:1px;height:9px;background:#999"></i>
      </span>
      <span class="i" style="margin-left:8px"><svg width="12" height="12"><path d="M0 6h12M6 0v12" stroke="#666" stroke-width="1.200"/></svg></span>
      <span class="t" style="margin-left:20px;width:50px;font-size:18px;font-weight:300">72%</span>
      <span class="i" style="margin-left:8px"><svg width="24" height="26" fill="none" stroke="#555" stroke-width="1.400"><path d="M7 7h10v12H7zM9 3l3-3 3 3M9 23l3 3 3-3M4 10l-3 3 3 3M20 10l3 3-3 3"/></svg></span>`;
  }
}

customElements.define('x-titlebar', XTitlebar);
customElements.define('x-menubar', XMenubar);
customElements.define('x-qat', XQat);
customElements.define('x-ribbon', XRibbon);
customElements.define('x-formula', XFormula);
customElements.define('x-thumb', XThumb);
customElements.define('x-main', XMain);
customElements.define('x-sheet', XSheet);
customElements.define('x-cell', XCell);
customElements.define('x-status', XStatus);
</script>
</body>
</html>
